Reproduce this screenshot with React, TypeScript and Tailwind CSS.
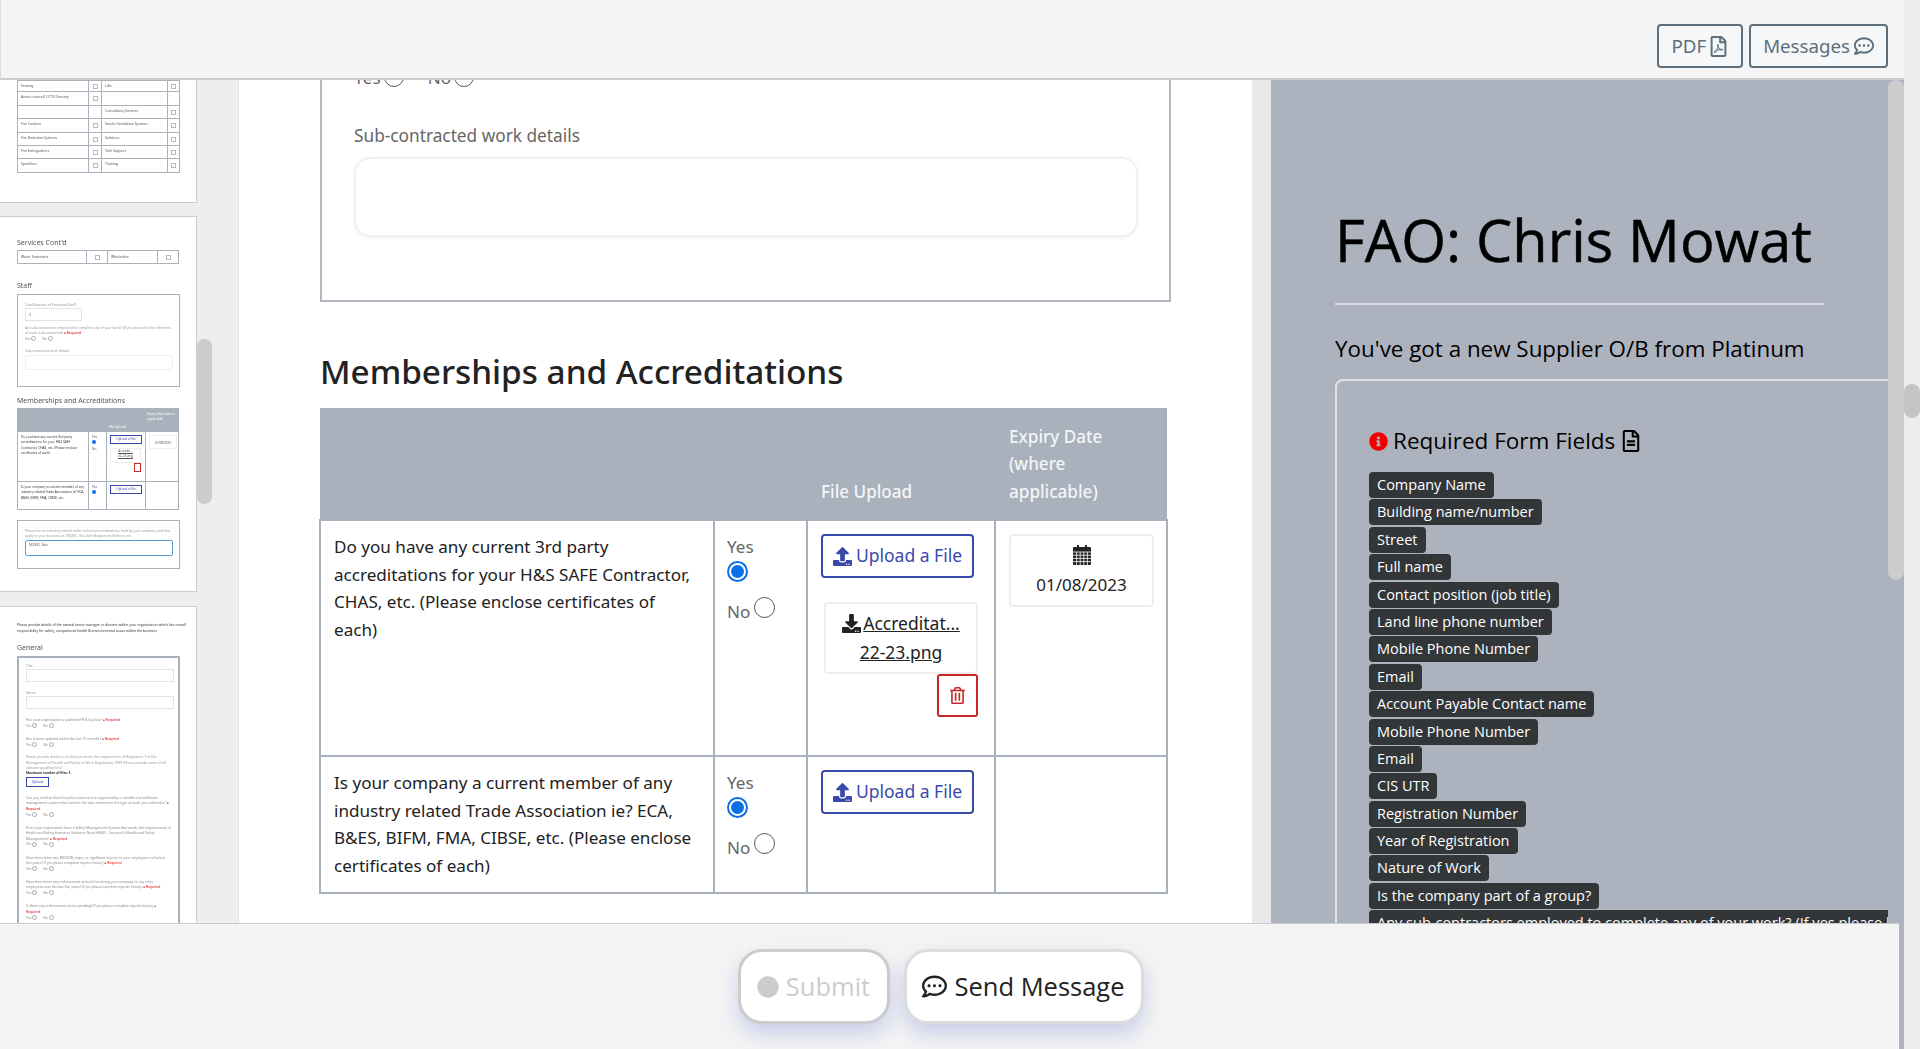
import { FaCircle, FaDownload, FaInfoCircle, FaRegCommentDots, FaRegFileAlt, FaRegFilePdf, FaRegTrashAlt, FaUpload } from 'react-icons/fa'

const OPEN = "font-['Open_Sans',sans-serif]"
const BODY = "font-['Noto_Sans',sans-serif]"

const REQUIRED_FIELDS = [
  'Company Name',
  'Building name/number',
  'Street',
  'Full name',
  'Contact position (job title)',
  'Land line phone number',
  'Mobile Phone Number',
  'Email',
  'Account Payable Contact name',
  'Mobile Phone Number',
  'Email',
  'CIS UTR',
  'Registration Number',
  'Year of Registration',
  'Nature of Work',
  'Is the company part of a group?',
  'Any sub-contractors employed to complete any of your work? (If yes please list the elements of work sub-contracted)',
]

const SERVICE_ROWS = [
  ['Fencing', 'Lifts', 11],
  ['Access control/ CCTV/ Security', '', 14],
  ['', 'Consultancy Services', 13],
  ['Fire Curtains', 'Smoke Ventilation Systems', 14],
  ['Fire Detection Systems', 'Solicitors', 13],
  ['Fire Extinguishers', 'Tech Support', 13],
  ['Sprinklers', 'Training', 14],
] as const

const GENERAL_QUESTIONS = [
  'Has your organisation a published H & S policy?',
  'Has it been updated within the last 12 months?',
]

const LATER_QUESTIONS = [
  'Can you confirm that the policy statement is supported by a suitable and sufficient management system that controls the risks inherent in the type of work you undertake?',
  'Does your organisation have a Safety Management System that meets the requirements of Health and Safety Executive Guidance Note HSG65 - Successful Health and Safety Management?',
  'Have there been any RIDDOR, major or significant injuries to your employees in the last five years? If yes please complete injuries history',
  'Have there been any enforcement action(s) involving your company or any of its employees over the last five years? If yes please complete injuries history',
  'Is there any enforcement action pending? If yes please complete injuries history',
]

function CalendarIcon() {
  return (
    <svg width="18" height="20" viewBox="0 0 18 20" className="mb-[5px] text-[#222]">
      <rect x="4" y="0" width="2" height="3" fill="currentColor" />
      <rect x="12" y="0" width="2" height="3" fill="currentColor" />
      <rect x="0" y="2" width="18" height="18" rx="1" fill="currentColor" />
      <g stroke="#fff" strokeWidth="0.8">
        <path d="M0 7h18M0 10.2h18M0 13.4h18M0 16.6h18" />
        <path d="M3.6 7v13M7.2 7v13M10.8 7v13M14.4 7v13" />
      </g>
    </svg>
  )
}

function Radio({ checked = false }: { checked?: boolean }) {
  if (checked) {
    return (
      <span className="inline-flex w-[21px] h-[21px] rounded-full border-2 border-[#0b6fe8] items-center justify-center">
        <span className="w-[13px] h-[13px] rounded-full bg-[#0b6fe8]" />
      </span>
    )
  }
  return <span className="inline-block w-[21px] h-[21px] rounded-full border border-[#555] bg-white" />
}

function YesNo({ noTop }: { noTop: number }) {
  return (
    <div className="text-[#666] pl-[12px] pt-[2px]">
      <div className="leading-[22px]">Yes</div>
      <Radio checked />
      <div className="flex items-start leading-[24px]" style={{ marginTop: noTop }}>
        <span>No</span>
        <span className="ml-[4px] -mt-[3px]">
          <Radio />
        </span>
      </div>
    </div>
  )
}

function UploadButton() {
  return (
    <div className="flex items-center justify-center gap-[4px] w-[153px] h-[44px] border-2 border-[#3949ab] rounded-[4px] text-[#3949ab] text-[17.5px]">
      <FaUpload size={19} />
      <span>Upload a File</span>
    </div>
  )
}

function MiniRadios() {
  return (
    <div className="flex items-center gap-[6px] text-[3.4px] text-[#888] h-[6px]">
      <span className="flex items-center gap-[1px]">Yes<span className="w-[5px] h-[5px] rounded-full border-[0.5px] border-[#aaa]" /></span>
      <span className="flex items-center gap-[1px]">No<span className="w-[5px] h-[5px] rounded-full border-[0.5px] border-[#aaa]" /></span>
    </div>
  )
}

function MiniQuestion({ text }: { text: string }) {
  return (
    <div className="mt-[7.6px]">
      <p className="text-[3.4px] leading-[5.4px] text-[#888]">
        {text} <span className="text-[#d00]">● Required</span>
      </p>
      <MiniRadios />
    </div>
  )
}

function MiniCheck() {
  return <span className="w-[5px] h-[5px] border-[0.5px] border-[#bbb]" />
}

function ThumbServices() {
  return (
    <div className="bg-white h-[123px] border-b border-r border-[#ccc] pl-[17px] w-[197px]">
      <div className="w-[163px] border-x border-b border-[#a8b1bc] text-[3.4px] text-[#555]">
        {SERVICE_ROWS.map(([left, right, height], i) => (
          <div key={i} className="grid grid-cols-[70px_13px_66px_1fr] border-t border-[#a8b1bc]" style={{ height }}>
            <span className="pl-[3px] pt-[2px]">{left}</span>
            <span className="border-l border-[#a8b1bc] flex items-center justify-center">{left && <MiniCheck />}</span>
            <span className="border-l border-[#a8b1bc] pl-[3px] pt-[2px]">{right}</span>
            <span className="border-l border-[#a8b1bc] flex items-center justify-center">{right && <MiniCheck />}</span>
          </div>
        ))}
      </div>
    </div>
  )
}

function ThumbStaff() {
  return (
    <div className="bg-white h-[376px] mt-[13px] border-y border-r border-[#ccc] pl-[17px] w-[197px] text-[#555]">
      <div className="text-[7px] leading-[10px] mt-[21px]">Services Cont'd</div>
      <div className="w-[162px] h-[14px] mt-[2px] border border-[#a8b1bc] grid grid-cols-[68px_21px_50px_1fr] text-[3.4px]">
        <span className="pl-[3px] pt-[3px]">Water Treatment</span>
        <span className="border-l border-[#a8b1bc] flex items-center justify-center"><MiniCheck /></span>
        <span className="border-l border-[#a8b1bc] pl-[3px] pt-[3px]">Wholesaler</span>
        <span className="border-l border-[#a8b1bc] flex items-center justify-center"><MiniCheck /></span>
      </div>
      <div className="text-[7px] leading-[10px] mt-[17px]">Staff</div>
      <div className="w-[163px] h-[93px] mt-[3px] border border-[#a8b1bc] px-[7px] pt-[7px] text-[3.4px] text-[#999]">
        <div className="leading-[5px]">Total Number of Employed Staff</div>
        <div className="w-[57px] h-[13px] mt-[1px] border border-[#e3e3e3] pl-[3px] pt-[3px] text-[#555]">5</div>
        <p className="mt-[4px] leading-[5.4px]">Are sub-contractors employed to complete any of your work? (If yes please list the elements of work sub-contracted) <span className="text-[#d00]">● Required</span></p>
        <MiniRadios />
        <div className="leading-[5px] mt-[6px]">Sub-contracted work details</div>
        <div className="w-[148px] h-[15px] mt-[2px] border border-[#eee] rounded-[2px]" />
      </div>
      <div className="text-[7px] leading-[10px] mt-[9px]">Memberships and Accreditations</div>
      <div className="w-[162px] h-[102px] mt-[2px] border border-[#a8b1bc] grid grid-cols-[70px_18px_39px_1fr] grid-rows-[23px_49px_1fr] text-[3.2px] leading-[5.3px]">
        <div className="col-span-2 bg-[#a8b1bc]" />
        <div className="bg-[#a8b1bc] text-white pl-[3px] pt-[16px]">File Upload</div>
        <div className="bg-[#a8b1bc] text-white pl-[2px] pt-[3px]">Expiry Date (where applicable)</div>
        <div className="p-[3px] text-[#333]">Do you have any current 3rd party accreditations for your H&amp;S SAFE Contractor, CHAS, etc. (Please enclose certificates of each)</div>
        <div className="border-l border-[#a8b1bc] pl-[3px] pt-[3px]">
          Yes
          <span className="block w-[4px] h-[4px] rounded-full bg-[#0b6fe8]" />
          <span className="block mt-[3px]">No</span>
        </div>
        <div className="border-l border-[#a8b1bc] pl-[3px] pt-[3px]">
          <div className="w-[32px] h-[9px] border border-[#3949ab] text-[#3949ab] text-center leading-[7px]">Upload a File</div>
          <div className="w-[31px] h-[15px] mt-[4px] border border-[#eee] text-center underline">Accredit...<br />22-23.png</div>
          <div className="w-[7px] h-[9px] ml-[24px] border border-[#c62828]" />
        </div>
        <div className="border-l border-[#a8b1bc] pl-[3px] pt-[3px]">
          <div className="w-[28px] h-[14px] border border-[#eee] text-center pt-[5px] text-[3px]">01/08/2023</div>
        </div>
        <div className="border-t border-[#a8b1bc] p-[3px] text-[#333]">Is your company a current member of any industry related Trade Association ie? ECA, B&amp;ES, BIFM, FMA, CIBSE, etc.</div>
        <div className="border-l border-t border-[#a8b1bc] pl-[3px] pt-[3px]">
          Yes
          <span className="block w-[4px] h-[4px] rounded-full bg-[#0b6fe8]" />
        </div>
        <div className="border-l border-t border-[#a8b1bc] pl-[3px] pt-[3px]">
          <div className="w-[32px] h-[9px] border border-[#3949ab] text-[#3949ab] text-center leading-[7px]">Upload a File</div>
        </div>
        <div className="border-l border-t border-[#a8b1bc]" />
      </div>
      <div className="w-[163px] h-[49px] mt-[10px] border border-[#a8b1bc] px-[7px] pt-[7px] text-[3.4px] leading-[5.4px] text-[#999]">
        <p>Please list an industry related skills/ technical accreditations held by your company and that apply to your business ie. NICEIC, Gas Safe Registered, Refcom, etc.</p>
        <div className="w-[148px] h-[16px] mt-[1px] border border-[#5b9bd5] rounded-[2px] pl-[3px] pt-[1px] text-[#555]">NICEIC, Gas</div>
      </div>
    </div>
  )
}

function ThumbGeneral() {
  return (
    <div className="bg-white mt-[14px] border-t border-r border-[#ccc] pl-[17px] w-[197px] pt-[15px] h-[330px] overflow-hidden">
      <p className="text-[3.4px] leading-[5.6px] text-[#333] w-[172px]">
        Please provide details of the named senior manager or director within your organisation which has overall responsibility for safety, occupational health &amp; environmental issues within the business
      </p>
      <div className="text-[7px] leading-[10px] mt-[10px] text-[#555]">General</div>
      <div className="w-[163px] mt-[3px] border-2 border-[#a8b1bc] px-[7px] pt-[5px] h-[300px] text-[#999]">
        <div className="text-[3.4px] leading-[5px]">Title</div>
        <div className="w-[148px] h-[13px] mt-[1px] border border-[#e3e3e3]" />
        <div className="text-[3.4px] leading-[5px] mt-[8px]">Name</div>
        <div className="w-[148px] h-[13px] mt-[1px] border border-[#e3e3e3]" />
        {GENERAL_QUESTIONS.map((q) => (
          <MiniQuestion key={q} text={q} />
        ))}
        <p className="text-[3.4px] leading-[5.4px] mt-[7px]">
          Please provide details as to how you meet the requirements of Regulation 7 of the Management of Health and Safety at Work Regulations 1999 (Please provide name of all relevant qualifications)
        </p>
        <div className="text-[3.2px] leading-[6px] text-[#333] font-bold">Maximum number of files: 5</div>
        <div className="w-[23px] h-[10px] mt-[1px] border border-[#3949ab] text-[3.4px] leading-[8px] text-center text-[#3949ab]">Upload</div>
        {LATER_QUESTIONS.map((q) => (
          <MiniQuestion key={q} text={q} />
        ))}
      </div>
    </div>
  )
}

function ThumbnailColumn() {
  return (
    <div className={`${BODY} w-[239px] shrink-0 flex bg-[#eee] overflow-hidden border-r border-[#e4e4e4]`}>
      <div className="w-[197px] shrink-0 blur-[0.35px]">
        <ThumbServices />
        <ThumbStaff />
        <ThumbGeneral />
      </div>
      <div className="w-[15px] h-[165px] mt-[259px] rounded-[7px] bg-[#ccc]" />
    </div>
  )
}

function MembershipsTable() {
  return (
    <table className="w-[847px] -ml-[1px] table-fixed border-collapse text-[17.1px] leading-[27.5px] text-[#222] mt-[14px]">
      <colgroup>
        <col className="w-[394px]" />
        <col className="w-[93px]" />
        <col className="w-[188px]" />
        <col className="w-[172px]" />
      </colgroup>
      <thead>
        <tr className="h-[112px] bg-[#a8b1bc] text-[#f4f5f7] text-left align-bottom">
          <th />
          <th />
          <th className="font-medium pl-[14px] pb-[14px]">File Upload</th>
          <th className="font-medium pl-[14px] pb-[14px]">Expiry Date<br />(where<br />applicable)</th>
        </tr>
      </thead>
      <tbody>
        <tr className="h-[236px] align-top">
          <td className="border-2 border-[#a8b1bc] pl-[13px] pt-[12px]">
            Do you have any current 3rd party<br />accreditations for your H&amp;S SAFE Contractor,<br />CHAS, etc. (Please enclose certificates of<br />each)
          </td>
          <td className="border-2 border-[#a8b1bc] pt-[13px]">
            <YesNo noTop={14} />
          </td>
          <td className="border-2 border-[#a8b1bc] pl-[13px] pt-[13px]">
            <UploadButton />
            <div className="w-[154px] h-[72px] mt-[24px] ml-[3px] border-2 border-[#eee] rounded-[4px] text-center text-[17.5px] leading-[29px] pt-[5px] underline">
              <FaDownload size={19} className="inline mr-[2px] mb-[3px]" />Accreditat...<br />22-23.png
            </div>
            <div className="w-[41px] h-[43px] ml-[116px] border-2 border-[#c62828] rounded-[3px] flex items-center justify-center text-[#c62828]">
              <FaRegTrashAlt size={17} />
            </div>
          </td>
          <td className="border-2 border-[#a8b1bc] pl-[13px] pt-[13px]">
            <div className="w-[145px] h-[73px] border-2 border-[#eee] rounded-[4px] flex flex-col items-center pt-[9px] text-[17px] leading-[29px]">
              <CalendarIcon />
              <span>01/08/2023</span>
            </div>
          </td>
        </tr>
        <tr className="h-[137px] align-top">
          <td className="border-2 border-[#a8b1bc] pl-[13px] pt-[12px]">
            Is your company a current member of any<br />industry related Trade Association ie? ECA,<br />B&amp;ES, BIFM, FMA, CIBSE, etc. (Please enclose<br />certificates of each)
          </td>
          <td className="border-2 border-[#a8b1bc] pt-[13px]">
            <YesNo noTop={14} />
          </td>
          <td className="border-2 border-[#a8b1bc] pl-[13px] pt-[13px]">
            <UploadButton />
          </td>
          <td className="border-2 border-[#a8b1bc]" />
        </tr>
      </tbody>
    </table>
  )
}

function MainColumn() {
  return (
    <div className={`${BODY} w-[1013px] shrink-0 bg-white overflow-hidden pl-[81px]`}>
      <div className="w-[851px] h-[256px] -mt-[34px] border-2 border-t-0 border-[#b0b6c2] pl-[32px]">
        <div className="flex gap-[24px] text-[17.1px] leading-[27px] text-[#666] pt-[15px] h-[47px]">
          <span className="flex items-center gap-[3px]">Yes<span className="w-[20px] h-[20px] rounded-full border border-[#555]" /></span>
          <span className="flex items-center gap-[3px]">No<span className="w-[20px] h-[20px] rounded-full border border-[#555]" /></span>
        </div>
        <div className="text-[17.25px] leading-[27px] text-[#666] mt-[29px]">Sub-contracted work details</div>
        <div className="w-[784px] h-[80px] mt-[8px] rounded-[16px] border-2 border-[#f0f0f0] shadow-[0_1px_3px_rgba(0,0,0,0.06)]" />
      </div>
      <h2 className="text-[33.3px] leading-[46px] font-medium text-[#222] mt-[46px]">Memberships and Accreditations</h2>
      <MembershipsTable />
    </div>
  )
}

function RightPanel() {
  return (
    <div className={`${OPEN} w-[617px] shrink-0 bg-[#adb3be] overflow-hidden pl-[64px] text-black`}>
      <h1 className="text-[57.6px] leading-[76px] font-medium mt-[122px] whitespace-nowrap [-webkit-text-stroke:0.5px_black]">FAO: Chris Mowat</h1>
      <div className="w-[489px] h-[2px] bg-[#d5d8de] mt-[25px]" />
      <p className="text-[22.4px] leading-[30px] mt-[29px] whitespace-nowrap">You've got a new Supplier O/B from Platinum</p>
      <div className="mt-[15px] w-[640px] h-[600px] border-2 border-[#dfe2e6] rounded-[8px] pl-[32px] pt-[44px]">
        <div className="flex items-center gap-[5px] text-[22.5px] leading-[32px] h-[32px]">
          <FaInfoCircle size={19} className="text-[#f00000]" />
          <span>Required Form Fields</span>
          <FaRegFileAlt size={22} />
        </div>
        <div className="flex flex-col items-start mt-[15px]">
          {REQUIRED_FIELDS.map((field, i) => (
            <span
              key={i}
              className="h-[26px] mb-[1.4px] px-[8px] bg-[#333639] text-white text-[14.5px] leading-[26px] rounded-[4px] whitespace-nowrap font-medium"
            >
              {field}
            </span>
          ))}
        </div>
      </div>
    </div>
  )
}

function Header() {
  return (
    <div className={`${BODY} h-[80px] flex justify-end items-start gap-[6px] bg-[#f4f4f4] border-b-2 border-l border-b-[#ccc] border-l-[#ddd] pt-[24px] pr-[16px]`}>
      <div className="h-[44px] px-[12px] flex items-center gap-[2px] rounded-[4px] border-2 border-[#5c6f7a] text-[#5c6f7a] text-[18.7px] bg-[#f5f7f8]">
        PDF <FaRegFilePdf size={21} />
      </div>
      <div className="h-[44px] px-[12px] flex items-center gap-[4px] rounded-[4px] border-2 border-[#5c6f7a] text-[#5c6f7a] text-[18.7px] bg-[#f5f7f8]">
        Messages <FaRegCommentDots size={20} />
      </div>
    </div>
  )
}

function Footer() {
  return (
    <div className={`${OPEN} absolute left-0 bottom-0 w-[1899px] h-[126px] bg-[#f4f4f4] border-t border-[#ccc] flex justify-center gap-[14px] pt-[25px] pr-[18px]`}>
      <div className="w-[152px] h-[75px] rounded-[24px] bg-white border-[3px] border-[#ccc] flex items-center justify-center gap-[7px] text-[#ccc] text-[25.5px] font-medium shadow-[0_10px_20px_rgba(90,110,210,0.28)]">
        <FaCircle size={22} />
        Submit
      </div>
      <div className="w-[240px] h-[75px] rounded-[24px] bg-white border-[3px] border-[#ddd] flex items-center justify-center gap-[7px] text-[#222] text-[25.5px] font-medium shadow-[0_10px_20px_rgba(90,110,210,0.28)]">
        <FaRegCommentDots size={25} />
        Send Message
      </div>
    </div>
  )
}

export default function App() {
  return (
    <div className="relative w-[1920px] h-[1049px] overflow-hidden flex bg-[#eee]">
      <div className="w-[1904px] h-full flex flex-col">
        <Header />
        <div className="flex flex-1 min-h-0">
          <ThumbnailColumn />
          <MainColumn />
          <div className="w-[19px] shrink-0 bg-[#e9e9e9]" />
          <RightPanel />
          <div className="w-[16px] shrink-0 bg-[#adb3be]">
            <div className="h-[500px] rounded-[8px] bg-[#ccc]" />
          </div>
        </div>
      </div>
      <div className="w-[16px] shrink-0 pt-[384px]">
        <div className="h-[34px] rounded-[8px] bg-[#c4c4c4]" />
      </div>
      <Footer />
    </div>
  )
}
